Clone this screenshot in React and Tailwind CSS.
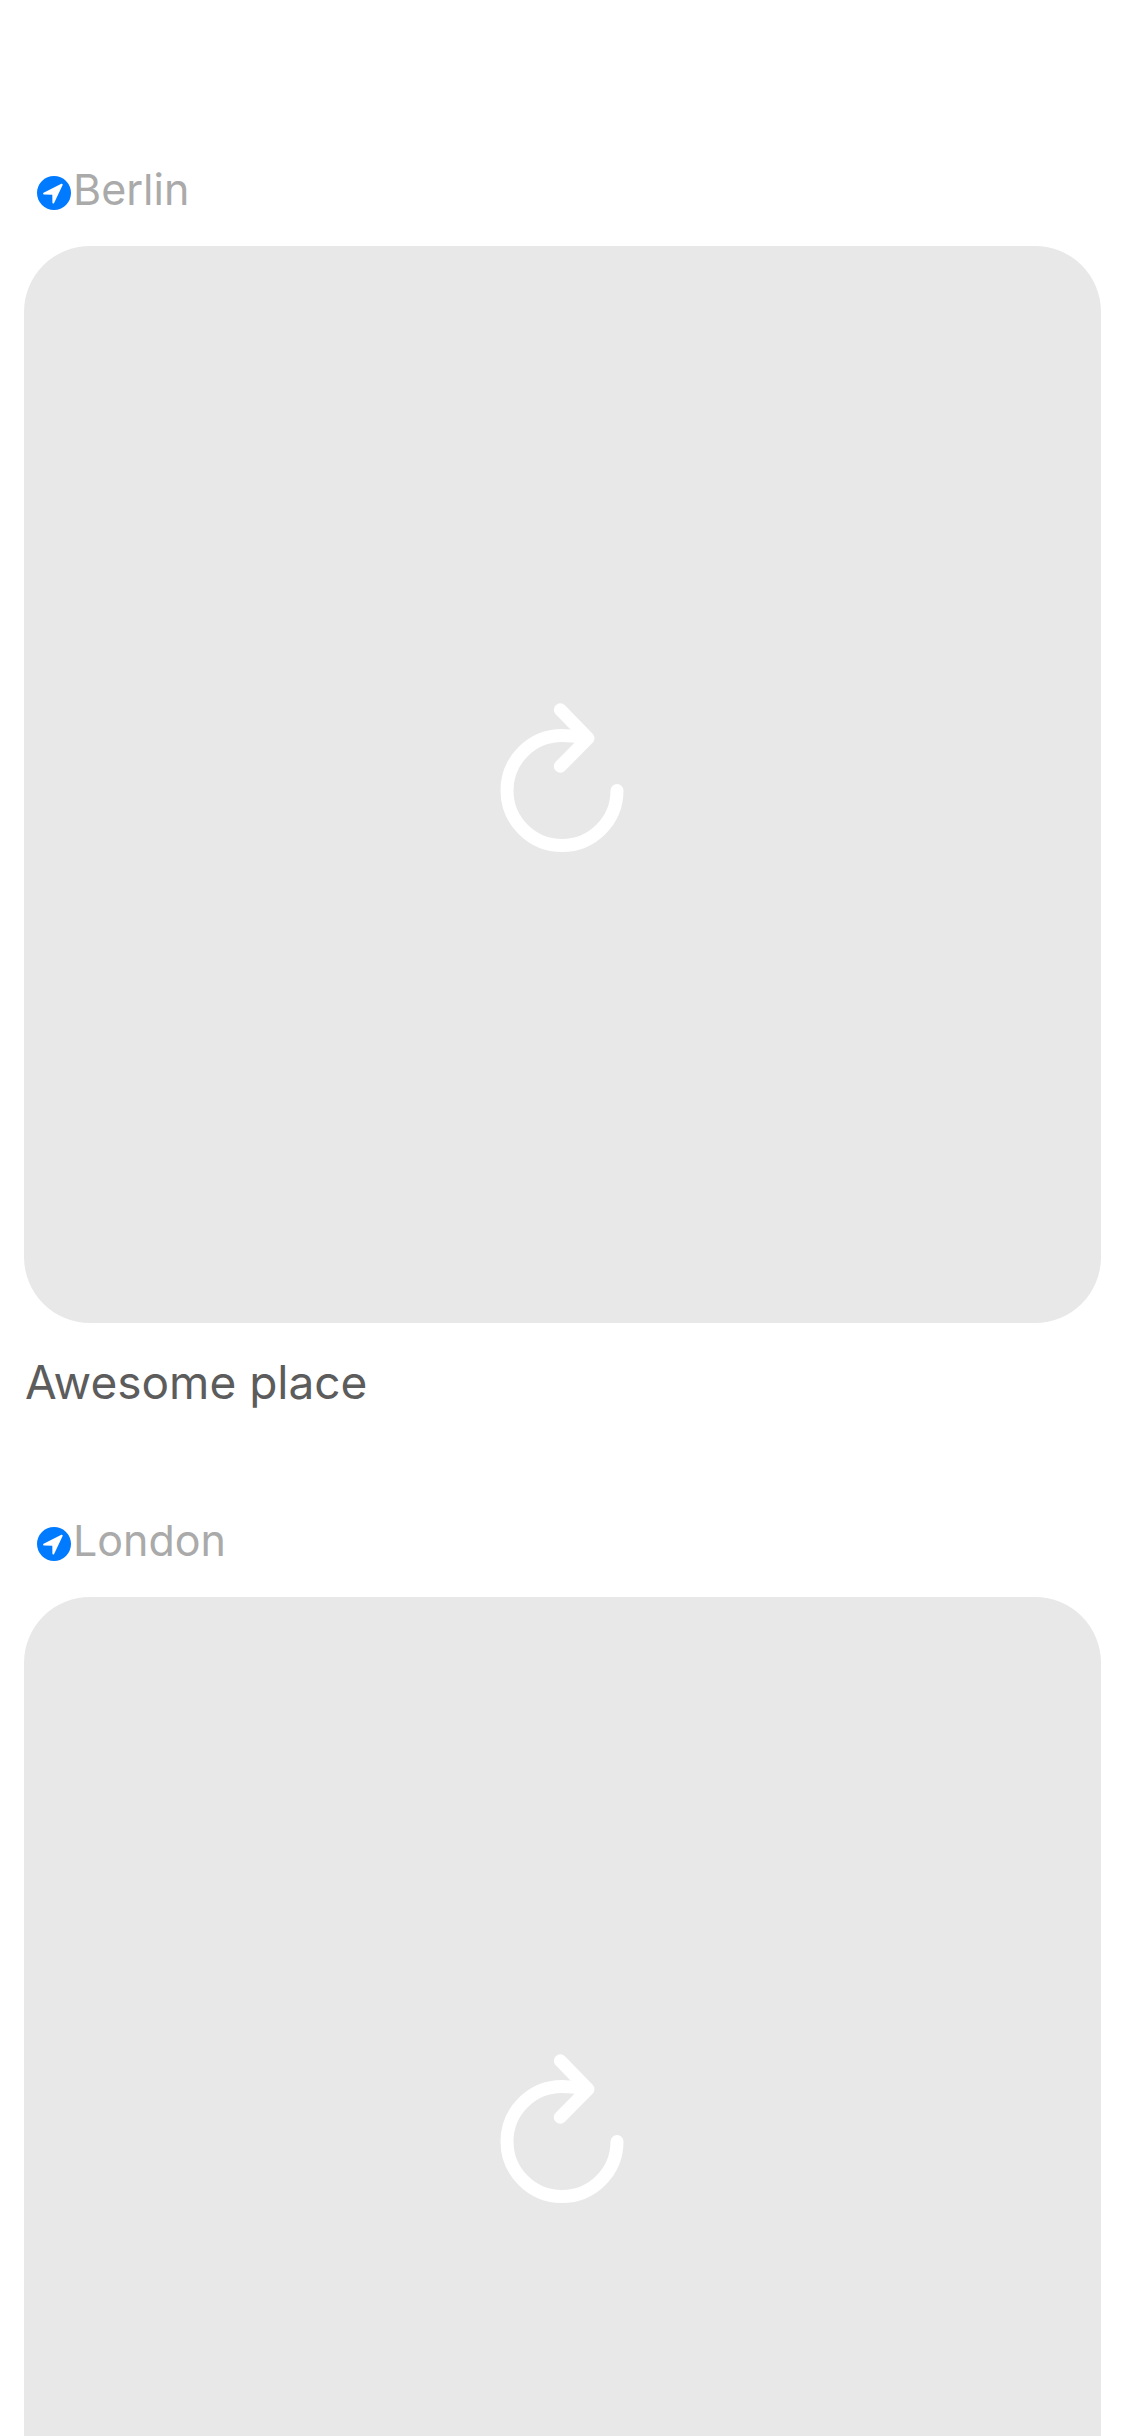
const posts = [
  { city: "Berlin", caption: "Awesome place" },
  { city: "London" },
];

function LocationIcon() {
  return (
    <svg className="mt-2 size-[34px] shrink-0" viewBox="0 0 34 34" aria-hidden="true">
      <circle cx="17" cy="17" r="17" fill="#007aff" />
      <path
        d="M7 17.6 L24.8 8.6 L16.3 26.6 L16.2 18.8 Q16.2 17.8 15.2 17.8 Z"
        fill="#fff"
        stroke="#fff"
        strokeWidth="1.8"
        strokeLinejoin="round"
      />
    </svg>
  );
}

function ReloadIcon() {
  return (
    <svg
      className="size-[164px]"
      viewBox="0 0 164 164"
      fill="none"
      stroke="#fff"
      strokeWidth="13"
      strokeLinecap="round"
      strokeLinejoin="round"
      aria-hidden="true"
    >
      <path d="M136 87.5 A55 55 0 1 1 81 32.5 Q92 32.5 103 35" />
      <path d="M79.3 6.8 L107 35.2 L79.3 63.2" />
    </svg>
  );
}

function Post({ city, caption }) {
  return (
    <article className="flex flex-col">
      <header className="flex h-[54px] items-center pl-[13px]">
        <LocationIcon />
        <h2 className="pl-0.5 text-[43px] leading-[54px] text-[#aaaaaa]">{city}</h2>
      </header>
      <button
        type="button"
        aria-label={"Reload photo of " + city}
        className="mt-[30px] flex aspect-square w-full items-center justify-center rounded-[66px] bg-[#e8e8e8]"
      >
        <ReloadIcon />
      </button>
      {caption && (
        <p className="mt-8 pl-px text-[46px] leading-[54px] text-[#5c5c5c]">{caption}</p>
      )}
    </article>
  );
}

export default function App() {
  return (
    <main className="h-screen overflow-y-auto bg-white px-6 pt-[162px] font-['Inter',sans-serif] [scrollbar-width:none]">
      <div className="flex flex-col gap-[104px]">
        {posts.map((post) => (
          <Post key={post.city} {...post} />
        ))}
      </div>
    </main>
  );
}
